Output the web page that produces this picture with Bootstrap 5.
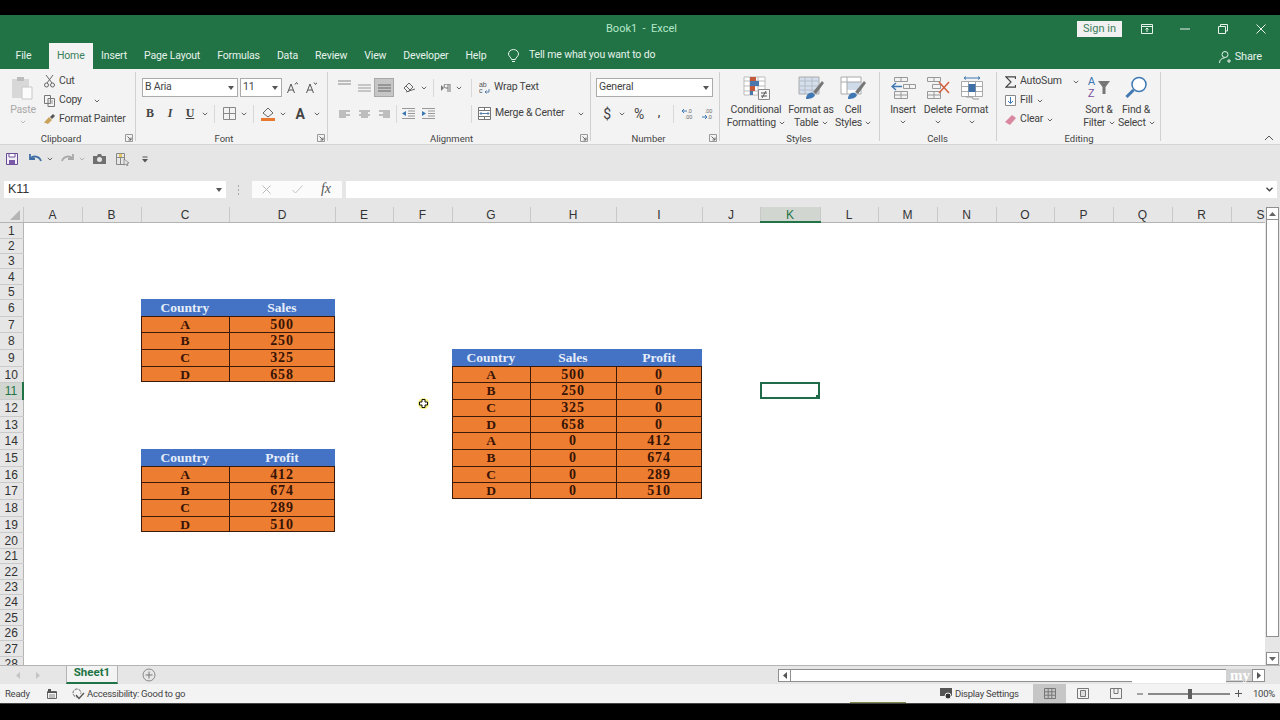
<!DOCTYPE html>
<html lang="en">
<head>
<meta charset="UTF-8">
<title>Book1 - Excel</title>
<link href="https://cdn.jsdelivr.net/npm/bootstrap@5.3.3/dist/css/bootstrap.min.css" rel="stylesheet">
<script src="https://cdn.jsdelivr.net/npm/bootstrap@5.3.3/dist/js/bootstrap.bundle.min.js"></script>
<style>
html, body { height: 100%; }
body { background: #000; overflow: hidden; font-family: Roboto, "Open Sans", sans-serif; font-size: 10.5px; letter-spacing: -.2px; color: #444; line-height: 1.2; }
svg { display: block; flex: none; }
.app { width: 1280px; height: 720px; padding: 15px 0 17px; position: relative; }
.app-inner { height: 688px; }

.titlebar { height: 27px; background: #217346; color: #b5e8c9; }
.title { left: 606px; top: 22px; position: absolute; font-size: 11px; letter-spacing: 0; }
.signin { background: #f1f1f1; color: #3c7f5c; width: 45px; height: 16px; margin-right: 6px; font-size: 11px; letter-spacing: 0; }
.win-btn { width: 38px; }
.tabbar { height: 27px; background: #217346; color: #e6f2ea; padding-left: 7px; letter-spacing: -.15px; }
.tab { padding: 1px 8.5px 0; height: 26px; margin-top: 1px; }
.tab.active { background: #f3f3f3; color: #3c7f5c; padding: 1px 8px 0; margin-left: 9px; }
.tellme { margin-left: 13px; gap: 10px; }
.share { margin-right: 18px; margin-top: 3px; font-size: 11px; }

.ribbon { height: 76px; background: #f3f3f3; border-bottom: 1px solid #d4d4d4; }
.rg { height: 73px; margin-top: 3px; position: relative; background: linear-gradient(#d0d0d0, #d0d0d0) right top / 1px 69px no-repeat; }
.rg-clip { width: 136px; } .rg-font { width: 192px; } .rg-align { width: 263px; }
.rg-num { width: 129px; } .rg-styles { width: 160px; } .rg-cells { width: 117px; } .rg-edit { width: 164px; }
.rg-body { height: 61px; padding-top: 6px; }
.rg-body.flat { padding-top: 0; }
.rg-label { height: 11px; line-height: 11px; font-size: 9.5px; letter-spacing: 0; text-align: center; color: #444; }
.rg-clip .rg-label { padding-right: 14px; }
.rg-font .rg-label { padding-right: 16px; }
.rg-align .rg-label { padding-right: 16px; }
.rg-num .rg-label { padding-right: 14px; }
.rg-styles .rg-label, .rg-cells .rg-label { padding-right: 2px; }
.launcher { position: absolute; right: 3px; bottom: 3px; }
.r { height: 19px; }
.r + .r { margin-top: 7px; }
.combo { height: 19px; background: #fff; border: 1px solid #ababab; padding: 0 3px 0 2px; color: #444; }
.combo-font { width: 96px; margin-left: 6px; margin-right: 2px; }
.combo-size { width: 42px; }
.combo-num { width: 117px; margin-left: 5px; }
.sl { height: 19px; }
.w10 { width: 10px; } .w14 { width: 14px; } .w16 { width: 16px; } .w18 { width: 18px; }
.w20 { width: 20px; } .w24 { width: 24px; }
.sep { width: 1px; height: 18px; background: #d8d8d8; margin: 0 4px; }
.sep.wide { margin: 0 7px; }
.sep.tight { margin: 0 1px 0 2px; }
.sep.far { margin: 0 6px 0 33px; }
.sl.on { background: #c6c6c6; border: 1px solid #a8a8a8; }
.bold { font-family: "Liberation Serif", serif; font-size: 12px; font-weight: 700; color: #444; }
.glyph-lg { font-size: 14px; line-height: 1; }
.big { text-align: center; line-height: 13px; flex: none; margin-top: 4px; }
.big .lbl { margin-top: 3px; white-space: nowrap; }
.big .lbl2 { white-space: nowrap; }
.big svg.ico { margin: 0 auto; }
.big svg.chev { display: inline-block; vertical-align: middle; margin-left: 1px; }
.big svg.chev-c { margin: 4px auto 0; }
.paste { width: 28px; margin-left: 9px; margin-right: 7px; }
.slot-cf { width: 62px; } .slot-fat { width: 48px; } .slot-cs { width: 36px; }
.slot-ins { width: 36px; } .slot-del { width: 34px; } .slot-fmt { width: 34px; }
.slot-list { width: 75px; } .slot-sort { width: 38px; } .slot-find { width: 36px; }
.pad-l5 { padding-left: 5px; } .pad-l6 { padding-left: 6px; } .pad-l8 { padding-left: 8px; }
.mini { height: 19px; white-space: nowrap; }
.muted { color: #a9a9a9; }
.collapse-btn { position: absolute; right: 6px; bottom: 3px; }

.qat { height: 28px; background: #e6e6e6; padding-left: 6px; }
.m5 { margin-left: 5px; } .m8 { margin-left: 8px; } .m10 { margin-left: 10px; } .m11 { margin-left: 11px; } .m12 { margin-left: 12px; } .m15 { margin-left: 15px; }
.formula { height: 34px; background: #e6e6e6; padding: 8px 3px 9px 4px; }
.namebox { width: 222px; height: 17px; background: #fff; padding: 0 4px; font-family: "Liberation Sans", sans-serif; font-size: 12.5px; letter-spacing: 0; color: #333; }
.fdots { margin: 0 12px 0 11px; }
.fx { width: 90px; height: 17px; background: #fbfbfb; padding-left: 10px; gap: 21px; }
.fx-mark { font-family: "Liberation Serif", serif; font-size: 14px; font-style: italic; color: #555; margin-left: -3px; }
.finput { height: 17px; background: #fff; margin-left: 4px; }

.grid-wrap { height: 458px; background: #fff; }
.sheet-clip { width: 1265px; height: 458px; overflow: hidden; position: relative; }
table.sheet { table-layout: fixed; width: 1290px; font-family: "Liberation Serif", serif; letter-spacing: 0; }
table.sheet td, table.sheet th { padding: 0; overflow: hidden; white-space: nowrap; }
table.sheet th { background: #e6e6e6; font-family: "Liberation Sans", sans-serif; font-weight: 400; font-size: 12px; color: #333; text-align: center; line-height: 1; padding-top: 1px; }
table.sheet th.ch { padding-top: 2px; }
th.ch { border-right: 1px solid #c8c8c8; border-bottom: 1px solid #b4b4b4; }
th.rh { border-bottom: 1px solid #cacaca; border-right: 1px solid #b4b4b4; }
th.corner { position: relative; border-bottom: 1px solid #b4b4b4; border-right: 1px solid #c8c8c8; }
th.corner::after { content: ""; position: absolute; right: 3px; bottom: 2px; border-style: solid; border-width: 0 0 10px 10px; border-color: transparent transparent #b5b5b5 transparent; }
table.sheet th.hl { background: #d2d6d0; color: #217346; }
th.ch.hl { border-bottom: 2px solid #217346; }
th.rh.hl { border-right: 2px solid #217346; }
table.sheet td.hd, table.sheet td.or { font-weight: 700; font-size: 13.5px; text-align: center; line-height: 1; padding-top: 1px; }
td.hd { background: #4472c4; color: #e4eefa; }
td.or { background: #ed7d31; color: #381405; box-shadow: inset 1px 1px 0 #3a1a0a; }
td.or.lastc { box-shadow: inset 1px 1px 0 #3a1a0a, inset -1px 0 0 #3a1a0a; }
td.or.lastr { box-shadow: inset 1px 1px 0 #3a1a0a, inset 0 -1px 0 #3a1a0a; }
td.or.lastc.lastr { box-shadow: inset 1px 1px 0 #3a1a0a, inset -1px -1px 0 #3a1a0a; }
table.sheet td.num { font-size: 14px; letter-spacing: .8px; }
td.sel { outline: 2px solid #1f6b4a; outline-offset: -2px; position: relative; }
td.sel::after { content: ""; position: absolute; right: 0; bottom: 0; width: 4px; height: 4px; background: #1f6b4a; }

.pointer { position: absolute; left: 418px; top: 398px; width: 11px; height: 11px; }
.vbar { width: 15px; background: #e6e6e6; padding-left: 1px; }
.sb-btn { width: 13px; height: 13px; background: #fff; border: 1px solid #8f8f8f; flex: none; }
.vthumb { width: 13px; height: 417px; background: #fff; border: 1px solid #8f8f8f; border-top: 0; }

.sheetbar { height: 19px; background: #e6e6e6; border-top: 1px solid #b4b4b4; }
.sheettab { width: 52px; height: 18px; margin-left: 26px; padding-bottom: 3px; background: #f3f3f3; border: 1px solid #b4b4b4; border-top: 0; border-bottom: 2px solid #217346; color: #217346; font-weight: 700; font-size: 11.5px; letter-spacing: 0; }
.hscroll { width: 461px; height: 13px; background: #fff; border: 1px solid #8f8f8f; border-left: 0; border-right: 0; }
.hscroll-box { margin-right: 15px; }
.statusbar { height: 19px; background: #f3f3f3; font-size: 9.5px; letter-spacing: -.25px; color: #444; }
.ready { margin-left: 5px; width: 24px; }
.macro { margin-left: 18px; }
.acc { margin-left: 2px; }
.display-gap { margin-left: 2px; width: 78px; white-space: nowrap; }
.viewbtn { width: 33px; height: 19px; }
.viewbtn.on { background: #c6c6c6; }
.slider { width: 82px; height: 2px; background: #8a8a8a; position: relative; margin: 0 5px; }
.slider::after { content: ""; position: absolute; left: 40px; top: -4px; width: 4px; height: 10px; background: #5f5f5f; }
.pct { margin: 0 5px 0 11px; width: 22px; white-space: nowrap; }
.wm { position: absolute; left: 1226px; top: 669px; width: 26px; height: 12px; background: #d2d2d2; color: #fff; font-weight: 700; font-family: "Liberation Serif", serif; font-size: 15px; line-height: 12px; letter-spacing: 0; text-align: right; padding-right: 2px; }
.wm-strip { position: absolute; left: 1132px; top: 680px; width: 94px; height: 3px; background: #fff; }
.olive { position: absolute; left: 850px; top: 702px; width: 56px; height: 2px; background: #7d8a45; }
.base { position: absolute; left: 0; top: 703px; width: 1280px; height: 1px; background: #444; }
</style>
</head>
<body>
<svg width="0" height="0" class="position-absolute">
  <symbol id="chev" viewBox="0 0 6 4"><path d="M.8.8 3 3 5.200.8" fill="none" stroke="#666"/></symbol>
  <symbol id="launch" viewBox="0 0 8 8"><path d="M.5.5h7v7h-7z" fill="none" stroke="#999"/><path d="M2.500 2.500 6 6M6 3.500V6H3.500" fill="none" stroke="#666"/></symbol>
  <symbol id="caret" viewBox="0 0 6 4"><path d="M0 0h6L3 4z" fill="#555"/></symbol>
  <symbol id="brush" viewBox="0 0 26 24"><path d="m15 16 9-11 2 2-8 11z" fill="#777"/><path d="M8 23c0-4 3-7 7-6l2 2c-1 3-5 4-9 4z" fill="#3f78b3"/></symbol>
</svg>

<div class="app">
 <div class="app-inner d-flex flex-column">

  <div class="titlebar d-flex align-items-center justify-content-end">
    <div class="title">Book1 &nbsp;-&nbsp; Excel</div>
    <div class="signin d-flex align-items-center justify-content-center">Sign in</div>
    <div class="win-btn d-flex justify-content-center"><svg width="12" height="10" viewBox="0 0 12 10"><path d="M.5.500h11v9H.5zM.5 2.500h11M6 8V4M4.500 5.500 6 4l1.500 1.500" fill="none" stroke="#e8f3ec"/></svg></div>
    <div class="win-btn d-flex justify-content-center"><svg width="10" height="2" viewBox="0 0 10 2"><path d="M0 1h10" stroke="#e8f3ec"/></svg></div>
    <div class="win-btn d-flex justify-content-center"><svg width="10" height="10" viewBox="0 0 10 10"><path d="M2.500 2.500V.5h7v6.500h-2M.5 2.500h7v7h-7z" fill="none" stroke="#e8f3ec"/></svg></div>
    <div class="win-btn d-flex justify-content-center"><svg width="10" height="10" viewBox="0 0 10 10"><path d="m.5.500 9 9M9.500.500l-9 9" fill="none" stroke="#e8f3ec"/></svg></div>
  </div>

  <div class="tabbar d-flex align-items-center">
    <div class="tab d-flex align-items-center">File</div>
    <div class="tab active d-flex align-items-center">Home</div>
    <div class="tab d-flex align-items-center">Insert</div>
    <div class="tab d-flex align-items-center">Page Layout</div>
    <div class="tab d-flex align-items-center">Formulas</div>
    <div class="tab d-flex align-items-center">Data</div>
    <div class="tab d-flex align-items-center">Review</div>
    <div class="tab d-flex align-items-center">View</div>
    <div class="tab d-flex align-items-center">Developer</div>
    <div class="tab d-flex align-items-center">Help</div>
    <div class="tellme d-flex align-items-center">
      <svg width="11" height="14" viewBox="0 0 11 14"><path d="M3.500 10.500C3.500 8.500.5 7.500.5 5a5 4.500 0 0 1 10 0c0 2.500-3 3.500-3 5.500zM4 12.500h3" fill="none" stroke="#e6f2ea"/></svg>
      <span>Tell me what you want to do</span>
    </div>
    <div class="share ms-auto d-flex align-items-center gap-1">
      <svg width="12" height="12" viewBox="0 0 12 12"><circle cx="6" cy="3.500" r="3" fill="none" stroke="#e6f2ea"/><path d="M.5 12c0-3 2-5 5-5M8 10h4M10 8v4" fill="none" stroke="#e6f2ea"/></svg>
      <span>Share</span>
    </div>
  </div>

  <div class="ribbon d-flex">
    <div class="rg rg-clip d-flex flex-column">
      <div class="rg-body flat d-flex">
        <div class="big muted paste">
          <svg class="ico" width="24" height="24" viewBox="0 0 24 24"><path d="M1 3h17v19H1z" fill="#d8d8d8"/><path d="M6 1h7v4H6z" fill="#bcbcbc"/><path d="M11 11h10v12H11z" fill="#fbfbfb" stroke="#c8c8c8"/></svg>
          <div class="lbl">Paste</div>
          <svg class="chev chev-c d-block" width="6" height="4"><use href="#chev" opacity=".4"/></svg>
        </div>
        <div class="d-flex flex-column">
          <div class="mini d-flex align-items-center gap-1"><svg width="11" height="13" viewBox="0 0 11 13"><path d="M2 0 8 8M9 0 3 8" stroke="#666" fill="none"/><circle cx="2.500" cy="10" r="2" fill="none" stroke="#666"/><circle cx="8.500" cy="10" r="2" fill="none" stroke="#666"/></svg><span>Cut</span></div>
          <div class="mini d-flex align-items-center gap-1"><svg width="11" height="12" viewBox="0 0 11 12"><path d="M.5.500h6v8h-6zM4 3.500h6.500v8H4z" fill="#f3f3f3" stroke="#777"/><path d="M5.500 6h3.500M5.500 8h3.500" stroke="#999"/></svg><span>Copy</span><svg class="ms-2" width="6" height="4"><use href="#chev"/></svg></div>
          <div class="mini d-flex align-items-center gap-1"><svg width="11" height="11" viewBox="0 0 11 11"><path d="M5 3 8 6 4 10 0 8.500z" fill="#c9a35c"/><path d="m6 3 3-3 2 2-3 3z" fill="#555"/></svg><span>Format Painter</span></div>
        </div>
      </div>
      <div class="rg-label">Clipboard</div>
      <svg class="launcher" width="8" height="8"><use href="#launch"/></svg>
    </div>

    <div class="rg rg-font d-flex flex-column">
      <div class="rg-body">
        <div class="r d-flex align-items-center">
          <div class="combo combo-font d-flex align-items-center justify-content-between">B Aria<svg width="6" height="4"><use href="#caret"/></svg></div>
          <div class="combo combo-size d-flex align-items-center justify-content-between">11<svg width="6" height="4"><use href="#caret"/></svg></div>
          <div class="sl w20 d-flex align-items-center justify-content-center"><svg width="11" height="11" viewBox="0 0 11 11"><path d="m.5 11 3.500-9 3.500 9M2 8h4M8 2.500l1.500-2 1.500 2" fill="none" stroke="#555"/></svg></div>
          <div class="sl w18 d-flex align-items-center justify-content-center"><svg width="11" height="11" viewBox="0 0 11 11"><path d="m.5 11 3.500-9 3.500 9M2 8h4M8 .5l1.500 2 1.500-2" fill="none" stroke="#555"/></svg></div>
        </div>
        <div class="r d-flex align-items-center">
          <div class="sl w20 d-flex align-items-center justify-content-center ms-1 bold">B</div>
          <div class="sl w20 d-flex align-items-center justify-content-center bold fst-italic">I</div>
          <div class="sl w20 d-flex align-items-center justify-content-center bold text-decoration-underline">U</div>
          <div class="sl w10 d-flex align-items-center justify-content-center"><svg width="6" height="4"><use href="#chev"/></svg></div>
          <div class="sep"></div>
          <div class="sl w20 d-flex align-items-center justify-content-center"><svg width="13" height="13" viewBox="0 0 13 13"><path d="M.5.500h12v12H.5zM6.500.500v12M.5 6.500h12" fill="none" stroke="#888"/></svg></div>
          <div class="sl w10 d-flex align-items-center justify-content-center"><svg width="6" height="4"><use href="#chev"/></svg></div>
          <div class="sep"></div>
          <div class="sl w20 d-flex align-items-center justify-content-center"><svg width="14" height="14" viewBox="0 0 14 14"><path d="M7 1 12 6 7 10 2 6z" fill="#f3f3f3" stroke="#666"/><path d="M0 11h14v3H0z" fill="#e8792f"/></svg></div>
          <div class="sl w10 d-flex align-items-center justify-content-center"><svg width="6" height="4"><use href="#chev"/></svg></div>
          <div class="sl w24 d-flex flex-column align-items-center justify-content-center"><span class="fw-bold glyph-lg">A</span></div>
          <div class="sl w10 d-flex align-items-center justify-content-center"><svg width="6" height="4"><use href="#chev"/></svg></div>
        </div>
      </div>
      <div class="rg-label">Font</div>
      <svg class="launcher" width="8" height="8"><use href="#launch"/></svg>
    </div>

    <div class="rg rg-align d-flex flex-column">
      <div class="rg-body pad-l6">
        <div class="r d-flex align-items-center">
          <div class="sl w20 d-flex align-items-start justify-content-center"><svg width="13" height="8" viewBox="0 0 13 8"><path d="M0 3h13M0 6h13" stroke="#888"/></svg></div>
          <div class="sl w20 d-flex align-items-center justify-content-center"><svg width="13" height="8" viewBox="0 0 13 8"><path d="M0 1h13M0 4h13M0 7h13" stroke="#999"/></svg></div>
          <div class="sl w20 on d-flex align-items-end justify-content-center pb-1"><svg width="13" height="8" viewBox="0 0 13 8"><path d="M0 1h13M0 4h13M0 7h13" stroke="#666"/></svg></div>
          <div class="sl w20 m5 d-flex align-items-center justify-content-center"><svg width="13" height="12" viewBox="0 0 13 12"><path d="M1 6 6 1l4 4-5 5zM3 10l9-3M3 4l4 4" fill="none" stroke="#666"/></svg></div>
          <div class="sl w10 d-flex align-items-center justify-content-center"><svg width="6" height="4"><use href="#chev"/></svg></div>
          <div class="sep"></div>
          <div class="sl w16 d-flex align-items-center justify-content-center"><svg width="10" height="8" viewBox="0 0 10 8"><path d="m0 1 3 3-3 3z" fill="#777"/><path d="M7 0v8M9 0v8M5 0h4M5 0a2 2 0 0 0 0 4h2" fill="none" stroke="#777"/></svg></div>
          <div class="sl w10 d-flex align-items-center justify-content-center"><svg width="6" height="4"><use href="#chev"/></svg></div>
          <div class="sep wide"></div>
          <div class="mini d-flex align-items-center gap-1"><svg width="11" height="13" viewBox="0 0 11 13"><text x="0" y="6" font-size="7" fill="#555" font-family="Liberation Sans">ab</text><text x="0" y="12" font-size="7" fill="#555" font-family="Liberation Sans">c</text><path d="M10 8v3H6M7.500 9.500 6 11l1.500 1.500" fill="none" stroke="#5a7fa8"/></svg><span>Wrap Text</span></div>
        </div>
        <div class="r d-flex align-items-center">
          <div class="sl w20 d-flex align-items-center justify-content-center"><svg width="11" height="8" viewBox="0 0 11 8"><path d="M0 1h11M0 3h7M0 5h11M0 7h7" stroke="#888"/></svg></div>
          <div class="sl w20 d-flex align-items-center justify-content-center"><svg width="11" height="8" viewBox="0 0 11 8"><path d="M0 1h11M2 3h7M0 5h11M2 7h7" stroke="#888"/></svg></div>
          <div class="sl w20 d-flex align-items-center justify-content-center"><svg width="11" height="8" viewBox="0 0 11 8"><path d="M0 1h11M4 3h7M0 5h11M4 7h7" stroke="#888"/></svg></div>
          <div class="sep tight"></div>
          <div class="sl w20 d-flex align-items-center justify-content-center"><svg width="13" height="11" viewBox="0 0 13 11"><path d="M0 .5h13M6 3h7M6 5.500h7M6 8h7M0 10.500h13" stroke="#999"/><path d="M4 3 0 5.500 4 8z" fill="#3a78b5"/></svg></div>
          <div class="sl w20 d-flex align-items-center justify-content-center"><svg width="13" height="11" viewBox="0 0 13 11"><path d="M0 .5h13M6 3h7M6 5.500h7M6 8h7M0 10.500h13" stroke="#999"/><path d="m0 3 4 2.500L0 8z" fill="#3a78b5"/></svg></div>
          <div class="sep far"></div>
          <div class="mini d-flex align-items-center gap-1"><svg width="13" height="13" viewBox="0 0 13 13"><path d="M.5.500h12v12H.5zM.5 3.500h12M.5 9.500h12M6.500.500v3M6.500 9.500v3" fill="#fff" stroke="#777"/><path d="M2 6.500h9M3.500 5 2 6.500 3.500 8M9.500 5 11 6.500 9.500 8" fill="none" stroke="#5a7fa8"/></svg><span>Merge &amp; Center</span><svg class="m10" width="6" height="4"><use href="#chev"/></svg></div>
        </div>
      </div>
      <div class="rg-label"><span>Alignment</span></div>
      <svg class="launcher" width="8" height="8"><use href="#launch"/></svg>
    </div>

    <div class="rg rg-num d-flex flex-column">
      <div class="rg-body">
        <div class="r d-flex align-items-center">
          <div class="combo combo-num d-flex align-items-center justify-content-between">General<svg width="6" height="4"><use href="#caret"/></svg></div>
        </div>
        <div class="r d-flex align-items-center ps-2">
          <div class="sl w16 d-flex align-items-center justify-content-center glyph-lg">$</div>
          <div class="sl w14 d-flex align-items-center justify-content-center"><svg width="6" height="4"><use href="#chev"/></svg></div>
          <div class="sl w20 d-flex align-items-center justify-content-center glyph-lg">%</div>
          <div class="sl w20 d-flex align-items-center justify-content-center fw-bold">,</div>
          <div class="sep"></div>
          <div class="sl w20 d-flex align-items-center justify-content-center"><svg width="12" height="12" viewBox="0 0 12 12"><path d="M5 3H0M2 1 0 3l2 2" fill="none" stroke="#3f78b3"/><text x="5.500" y="5" font-size="5.500" fill="#666" font-family="Liberation Sans">.0</text><text x="3" y="11" font-size="5.500" fill="#666" font-family="Liberation Sans">.00</text></svg></div>
          <div class="sl w20 d-flex align-items-center justify-content-center"><svg width="12" height="12" viewBox="0 0 12 12"><text x="3" y="5" font-size="5.500" fill="#666" font-family="Liberation Sans">.00</text><path d="M0 9h5M3 7l2 2-2 2" fill="none" stroke="#3f78b3"/><text x="5.500" y="11" font-size="5.500" fill="#666" font-family="Liberation Sans">.0</text></svg></div>
        </div>
      </div>
      <div class="rg-label">Number</div>
      <svg class="launcher" width="8" height="8"><use href="#launch"/></svg>
    </div>

    <div class="rg rg-styles d-flex flex-column">
      <div class="rg-body flat d-flex pad-l5">
        <div class="big slot-cf">
          <svg class="ico" width="27" height="24" viewBox="0 0 27 24"><path d="M1 1h21v18H1zM1 5h21M1 10h21M1 15h21M7 1v18M15 1v18" fill="#fff" stroke="#bbb"/><path d="M7 1h6v4H7z" fill="#c4583a"/><path d="M7 5h9v5H7z" fill="#4a78ac"/><path d="M7 10h5v5H7z" fill="#c4583a"/><path d="M7 15h3v4H7z" fill="#4a78ac"/><path d="M15.500 13.500h11v10h-11z" fill="#f8f8f8" stroke="#888"/><path d="M18 17h6M18 20h6M23 15l-4 7" stroke="#555" fill="none"/></svg>
          <div class="lbl">Conditional</div><div class="lbl2">Formatting <svg class="chev" width="6" height="4"><use href="#chev"/></svg></div>
        </div>
        <div class="big slot-fat">
          <svg class="ico" width="26" height="24" viewBox="0 0 26 24"><path d="M1 1h20v17H1z" fill="#d4dfed" stroke="#aaa"/><path d="M1 5h20M1 10h20M1 14h20M7 1v17M14 1v17" stroke="#b4bbc5"/><use href="#brush" width="26" height="24"/></svg>
          <div class="lbl">Format as</div><div class="lbl2">Table <svg class="chev" width="6" height="4"><use href="#chev"/></svg></div>
        </div>
        <div class="big slot-cs">
          <svg class="ico" width="26" height="24" viewBox="0 0 26 24"><path d="M1 1h20v17H1z" fill="#fff" stroke="#aaa"/><path d="M7 6h14v8H7z" fill="#cfdbe8"/><path d="M1 6h20M7 1v17" stroke="#aaa"/><use href="#brush" width="26" height="24"/></svg>
          <div class="lbl">Cell</div><div class="lbl2">Styles <svg class="chev" width="6" height="4"><use href="#chev"/></svg></div>
        </div>
      </div>
      <div class="rg-label">Styles</div>
    </div>

    <div class="rg rg-cells d-flex flex-column">
      <div class="rg-body flat d-flex pad-l5">
        <div class="big slot-ins">
          <svg class="ico" width="25" height="24" viewBox="0 0 25 24"><path d="M3.500 1.500h13v4h-13zM10 1.500v4M3.500 15.500h13v7h-13zM3.500 19h13M10 15.500v7M12.500 8.500h12v4h-12zM18.500 8.500v4" fill="none" stroke="#999"/><path d="M11 10.500H1M5 7l-4 3.500L5 14" fill="none" stroke="#3f78b3" stroke-width="1.500"/></svg>
          <div class="lbl">Insert</div><svg class="chev chev-c d-block" width="6" height="4"><use href="#chev"/></svg>
        </div>
        <div class="big slot-del">
          <svg class="ico" width="25" height="24" viewBox="0 0 25 24"><path d="M1.500 1.500h13v4h-13zM8 1.500v4M1.500 15.500h13v7h-13zM1.500 19h13M8 15.500v7M6.500 8.500h8v4h-8z" fill="none" stroke="#999"/><path d="m13 6 10 11M23 6 13 17" stroke="#d1603d" stroke-width="1.500"/></svg>
          <div class="lbl">Delete</div><svg class="chev chev-c d-block" width="6" height="4"><use href="#chev"/></svg>
        </div>
        <div class="big slot-fmt">
          <svg class="ico" width="24" height="24" viewBox="0 0 24 24"><path d="M1.500 5.500h21v15h-21zM1.500 10.500h21M1.500 15.500h21M8.500 5.500v15M15.500 5.500v15" fill="#fff" stroke="#aaa"/><path d="M8.500 8h7v8h-7z" fill="#3f6fa5"/><path d="M4 2h16M6 .5 4 2l2 1.500M18 .5 20 2l-2 1.500" fill="none" stroke="#3f78b3"/><path d="M6 21h6l1 2h6" fill="none" stroke="#999"/></svg>
          <div class="lbl">Format</div><svg class="chev chev-c d-block" width="6" height="4"><use href="#chev"/></svg>
        </div>
      </div>
      <div class="rg-label">Cells</div>
    </div>

    <div class="rg rg-edit d-flex flex-column">
      <div class="rg-body flat d-flex pad-l8">
        <div class="d-flex flex-column slot-list">
          <div class="mini d-flex align-items-center"><svg width="11" height="12" viewBox="0 0 11 12"><path d="M10.500 3V.8H1L6 6 1 11.200h9.500V9" fill="none" stroke="#444" stroke-width="1.200"/></svg><span class="ms-1">AutoSum</span><svg class="m11" width="6" height="4"><use href="#chev"/></svg></div>
          <div class="mini d-flex align-items-center gap-1"><svg width="11" height="11" viewBox="0 0 11 11"><path d="M.5.500h10v10H.5z" fill="#fff" stroke="#888"/><path d="M5.500 2v6M3 6l2.500 2.500L8 6" fill="none" stroke="#3f78b3"/></svg><span>Fill</span><svg width="6" height="4"><use href="#chev"/></svg></div>
          <div class="mini d-flex align-items-center gap-1"><svg width="11" height="10" viewBox="0 0 11 10"><path d="M7 0l4 3-6 7-5-3z" fill="#d9899f"/></svg><span>Clear</span><svg width="6" height="4"><use href="#chev"/></svg></div>
        </div>
        <div class="big slot-sort">
          <svg class="ico" width="24" height="23" viewBox="0 0 24 23"><text x="1" y="9" font-size="10.500" fill="#3f78b3" font-family="Liberation Sans">A</text><text x="1" y="21" font-size="10.500" fill="#7a4f9c" font-family="Liberation Sans">Z</text><path d="M11 5h12l-4.500 6v7h-3v-7z" fill="#777"/></svg>
          <div class="lbl mt-1">Sort &amp;</div><div class="lbl2">Filter <svg class="chev" width="6" height="4"><use href="#chev"/></svg></div>
        </div>
        <div class="big slot-find">
          <svg class="ico" width="24" height="23" viewBox="0 0 24 23"><circle cx="15" cy="8.500" r="7" fill="#fff" stroke="#3f78b3" stroke-width="1.500"/><path d="M9.500 14 2.500 21" stroke="#3f78b3" stroke-width="3"/></svg>
          <div class="lbl mt-1">Find &amp;</div><div class="lbl2">Select <svg class="chev" width="6" height="4"><use href="#chev"/></svg></div>
        </div>
      </div>
      <div class="rg-label">Editing</div>
    </div>

    <div class="flex-grow-1 position-relative">
      <svg class="collapse-btn" width="10" height="6" viewBox="0 0 10 6"><path d="M1 5 5 1l4 4" fill="none" stroke="#555"/></svg>
    </div>
  </div>

  <div class="qat d-flex align-items-center">
    <svg width="12" height="12" viewBox="0 0 12 12"><path d="M.5.500h11v11H.5z" fill="#f3eff7" stroke="#6b4c96"/><path d="M3 .5h6V4H3z" fill="#fff" stroke="#6b4c96"/><path d="M3 7h6v4.500H3z" fill="#7a5aa6"/></svg>
    <svg class="m11" width="13" height="12" viewBox="0 0 13 12"><path d="M1 1v5h5M1.500 5.500C4 2.500 10 2.500 12 8" fill="none" stroke="#3f6fa5" stroke-width="1.800"/></svg>
    <svg class="m5" width="6" height="4"><use href="#chev"/></svg>
    <svg class="m8" width="13" height="12" viewBox="0 0 13 12"><path d="M12 1v5H7M11.500 5.500C9 2.500 3 2.500 1 8" fill="none" stroke="#a8a8a8" stroke-width="1.800"/></svg>
    <svg class="m5" width="6" height="4"><use href="#chev" opacity=".4"/></svg>
    <svg class="m8" width="13" height="10" viewBox="0 0 13 10"><path d="M0 2h4l1-2h3l1 2h4v8H0z" fill="#707070"/><circle cx="6.500" cy="5.500" r="2.500" fill="#e6e6e6"/></svg>
    <svg class="m10" width="14" height="13" viewBox="0 0 14 13"><path d="M.5.500h8v11h-8zM.5 4.500h8M4.500.500v11" fill="none" stroke="#888"/><path d="M3 1h3v3H3z" fill="#e5c85f"/><path d="m8 6 5 4-2 .5 1 2-1 .5-1-2-2 1z" fill="#e6e6e6" stroke="#777" stroke-width=".7"/></svg>
    <svg class="m12" width="6" height="7" viewBox="0 0 6 7"><path d="M.5 1h5" stroke="#555"/><path d="M0 3h6L3 6.500z" fill="#555"/></svg>
  </div>

  <div class="formula d-flex align-items-center">
    <div class="namebox d-flex align-items-center justify-content-between">K11<svg width="6" height="4"><use href="#caret"/></svg></div>
    <svg class="fdots" width="3" height="10" viewBox="0 0 3 10"><path d="M1.500 0v2M1.500 4v2M1.500 8v2" stroke="#aaa"/></svg>
    <div class="fx d-flex align-items-center">
      <svg width="9" height="9" viewBox="0 0 9 9"><path d="m.5.500 8 8M8.500.500l-8 8" stroke="#bbb"/></svg>
      <svg width="11" height="9" viewBox="0 0 11 9"><path d="m.5 5 3 3 7-7.500" fill="none" stroke="#c4c4c4"/></svg>
      <span class="fx-mark">fx</span>
    </div>
    <div class="finput flex-grow-1 d-flex align-items-center justify-content-end pe-1"><svg width="7" height="5" viewBox="0 0 7 5"><path d="m.5.800 3 3 3-3" fill="none" stroke="#444" stroke-width="1.400"/></svg></div>
  </div>

  <div class="grid-wrap d-flex">
    <div class="sheet-clip"><table class="sheet" id="sheet"></table></div>
    <div class="vbar d-flex flex-column">
      <div class="sb-btn mt-0 d-flex align-items-center justify-content-center"><svg width="7" height="4" viewBox="0 0 7 4"><path d="M3.500 0 7 4H0z" fill="#666"/></svg></div>
      <div class="vthumb"></div>
      <div class="flex-grow-1"></div>
      <div class="sb-btn d-flex align-items-center justify-content-center"><svg width="7" height="4" viewBox="0 0 7 4"><path d="M3.500 4 7 0H0z" fill="#666"/></svg></div>
    </div>
  </div>

  <div class="sheetbar d-flex align-items-center">
    <svg class="ms-3" width="4" height="7" viewBox="0 0 4 7"><path d="M4 0v7L0 3.500z" fill="#c4c4c4"/></svg>
    <svg class="ms-3" width="4" height="7" viewBox="0 0 4 7"><path d="M0 0v7l4-3.500z" fill="#c4c4c4"/></svg>
    <div class="sheettab d-flex align-items-center justify-content-center align-self-start">Sheet1</div>
    <svg class="ms-4" width="14" height="14" viewBox="0 0 14 14"><circle cx="7" cy="7" r="6" fill="none" stroke="#888"/><path d="M7 3.500v7M3.500 7h7" stroke="#777"/></svg>
    <div class="ms-auto d-flex align-items-center hscroll-box">
      <div class="sb-btn d-flex align-items-center justify-content-center"><svg width="4" height="7" viewBox="0 0 4 7"><path d="M4 0v7L0 3.500z" fill="#555"/></svg></div>
      <div class="hscroll"></div>
      <div class="sb-btn d-flex align-items-center justify-content-center"><svg width="4" height="7" viewBox="0 0 4 7"><path d="M0 0v7l4-3.500z" fill="#555"/></svg></div>
    </div>
  </div>

  <div class="statusbar d-flex align-items-center">
    <span class="ready">Ready</span>
    <svg class="macro" width="10" height="10" viewBox="0 0 10 10"><path d="M.5 2.500h9v7h-9z" fill="none" stroke="#666"/><path d="M1 0h3v3H1zM0 3h10v1H0z" fill="#555"/><path d="M2 6h6M2 8h6" stroke="#888"/></svg>
    <svg class="m15" width="13" height="12" viewBox="0 0 13 12"><circle cx="5" cy="5" r="4" fill="none" stroke="#666" stroke-dasharray="3 1"/><path d="m4 7 3 3.500L12 5" fill="#f3f3f3" stroke="#555" stroke-width="1.300"/></svg>
    <span class="acc">Accessibility: Good to go</span>
    <div class="ms-auto d-flex align-items-center">
      <svg width="13" height="12" viewBox="0 0 13 12"><path d="M0 0h12v8H0z" fill="#555"/><circle cx="8" cy="8" r="3" fill="#333" stroke="#f3f3f3"/></svg>
      <span class="display-gap">Display Settings</span>
      <div class="viewbtn on d-flex align-items-center justify-content-center"><svg width="12" height="11" viewBox="0 0 12 11"><path d="M.5.500h11v10H.5zM.5 3.800h11M.5 7.200h11M4.200.500v10M7.800.500v10" fill="none" stroke="#777"/></svg></div>
      <div class="viewbtn d-flex align-items-center justify-content-center"><svg width="12" height="11" viewBox="0 0 12 11"><path d="M.5.500h11v10H.5z" fill="none" stroke="#777"/><path d="M3.500 2.500h5v6h-5z" fill="#ddd" stroke="#777"/></svg></div>
      <div class="viewbtn d-flex align-items-center justify-content-center"><svg width="12" height="11" viewBox="0 0 12 11"><path d="M.5.500h11v10H.5zM4 .500v5h4v-5" fill="none" stroke="#777"/></svg></div>
      <svg class="m5" width="6" height="2" viewBox="0 0 6 2"><path d="M0 1h6" stroke="#555"/></svg>
      <div class="slider"></div>
      <svg width="7" height="7" viewBox="0 0 7 7"><path d="M0 3.500h7M3.500 0v7" stroke="#555"/></svg>
      <span class="pct">100%</span>
    </div>
  </div>
 </div>

 <svg class="pointer" viewBox="0 0 11 11"><circle cx="5.500" cy="5.500" r="5.500" fill="#f5f17a"/><path d="M4 1.500h3V4h2.500v3H7v2.500H4V7H1.500V4H4z" fill="#fff" stroke="#111"/></svg>
 <div class="wm-strip"></div>
 <div class="wm">my</div>
 <div class="olive"></div>
 <div class="base"></div>
</div>

<script>
const colWidths = [59,59,88,106,58,59,78,86,86,58,60,58,59,59,58,59,59,59,59];
const rowHeights = [16,15,15,16,15, 17,16,17,17,16,17,17,16,17,17,16,17,17,16, 16,15,16,15,15,16,15,16,15];
const cells = {};

function putTable(row, col, data) {
    data.forEach((line, r) => line.forEach((val, c) => {
        let cls = r === 0 ? 'hd' : 'or';
        if (c === line.length - 1) cls += ' lastc';
        if (r === data.length - 1) cls += ' lastr';
        if (typeof val === 'number') cls += ' num';
        cells[(row + r) + ':' + (col + c)] = { val: val, cls: cls };
    }));
}

putTable(6, 2, [['Country','Sales'],['A',500],['B',250],['C',325],['D',658]]);
putTable(15, 2, [['Country','Profit'],['A',412],['B',674],['C',289],['D',510]]);
putTable(9, 6, [['Country','Sales','Profit'],['A',500,0],['B',250,0],['C',325,0],['D',658,0],['A',0,412],['B',0,674],['C',0,289],['D',0,510]]);

let html = '<colgroup><col style="width:23px">' + colWidths.map(w => `<col style="width:${w}px">`).join('') + '</colgroup>';
html += '<tr style="height:15px"><th class="corner"></th>';
colWidths.forEach((w, i) => {
    const name = String.fromCharCode(65 + i);
    html += `<th class="ch ${name === 'K' ? 'hl' : ''}">${name}</th>`;
});
html += '</tr>';
rowHeights.forEach((h, i) => {
    const row = i + 1;
    html += `<tr style="height:${h}px"><th class="rh ${row === 11 ? 'hl' : ''}">${row}</th>`;
    colWidths.forEach((w, c) => {
        const cell = cells[row + ':' + c];
        if (cell) html += `<td class="${cell.cls}">${cell.val}</td>`;
        else if (row === 11 && c === 10) html += '<td class="sel"></td>';
        else html += '<td></td>';
    });
    html += '</tr>';
});
document.getElementById('sheet').innerHTML = html;
</script>
</body>
</html>
